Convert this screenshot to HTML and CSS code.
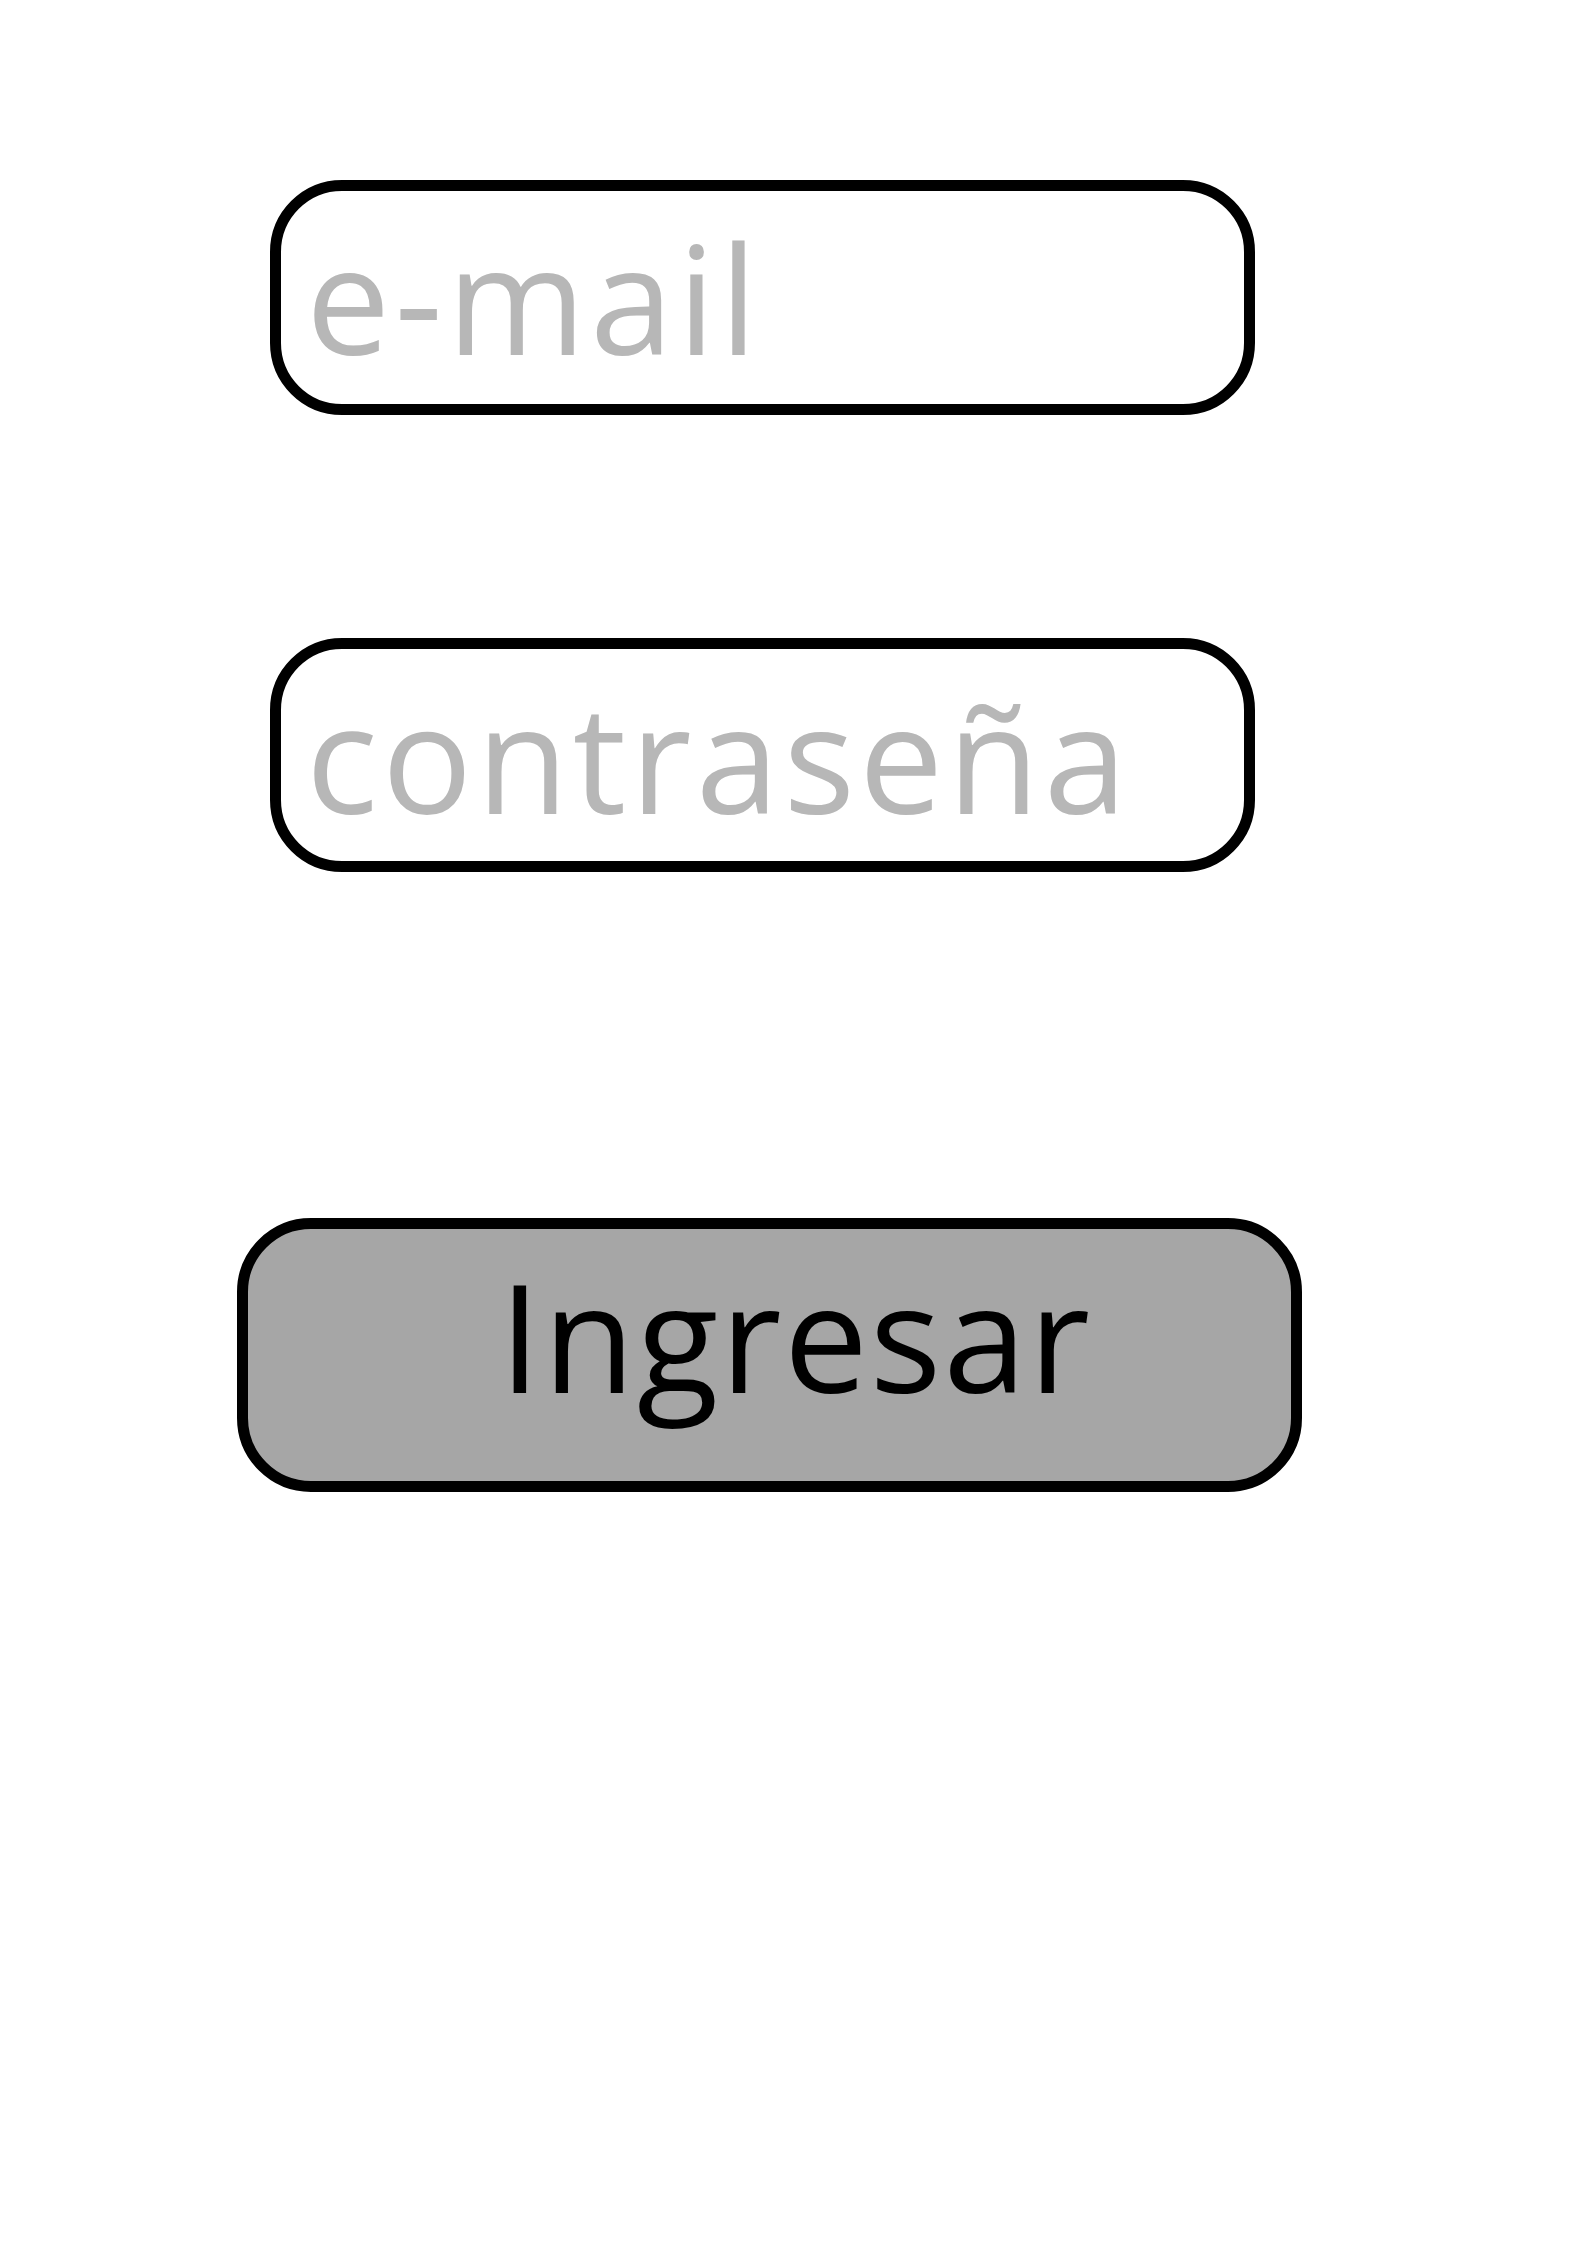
FILE: index.html
```html
<!DOCTYPE html>
<html lang="es">
<head>
<meta charset="utf-8">
<title>Ingresar</title>
<link rel="stylesheet" href="styles.css">
</head>
<body>
<main class="login">
  <div class="field field-email">e-mail</div>
  <div class="field field-pass">contraseña</div>
  <div class="btn">Ingresar</div>
</main>
</body>
</html>
```
FILE: styles.css
```css
html, body {
  margin: 0;
  padding: 0;
  background: #ffffff;
}
.login {
  display: flex;
  flex-direction: column;
  align-items: flex-start;
  padding-top: 180px;
  font-family: "Open Sans", "Noto Sans", sans-serif;
}
.field {
  box-sizing: border-box;
  width: 985px;
  height: 235px;
  margin-left: 270px;
  border: 11px solid #000;
  border-radius: 72px;
  font-size: 150px;
  line-height: 150px;
  letter-spacing: 4.2px;
  color: #b7b7b7;
  padding: 31px 0 0 25px;
  white-space: nowrap;
}
.field-pass {
  margin-top: 223px;
  height: 234px;
  padding-top: 32px;
  letter-spacing: 4.2px;
}
.btn {
  box-sizing: border-box;
  width: 1065px;
  height: 274px;
  margin-left: 237px;
  margin-top: 346px;
  border: 11px solid #000;
  border-radius: 74px;
  background: #a6a6a6;
  font-size: 150px;
  line-height: 150px;
  letter-spacing: 2px;
  color: #000;
  padding: 31px 0 0 251px;
  white-space: nowrap;
}
```
